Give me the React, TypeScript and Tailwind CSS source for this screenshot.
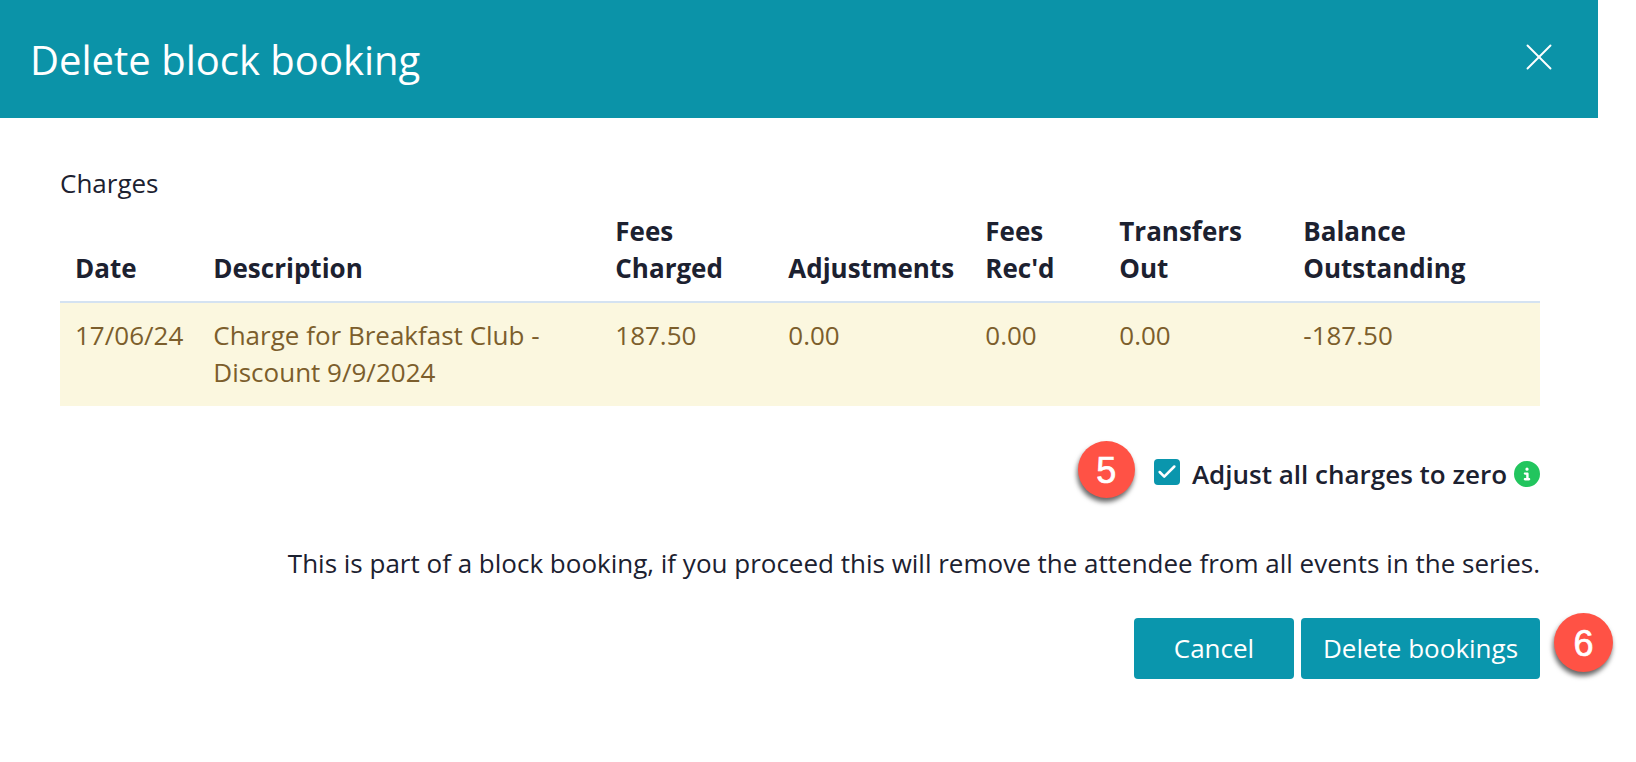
import { X, Check } from "lucide-react";
import { FaCircleInfo } from "react-icons/fa6";

const teal = "bg-[#0a96ad]";

function Th({ children, className = "" }: { children: React.ReactNode; className?: string }) {
  return <th className={`px-[15px] pb-[14px] pt-0 text-left align-bottom font-bold text-[#1c2130] leading-[37px] ${className}`}>{children}</th>;
}
function Td({ children }: { children: React.ReactNode }) {
  return <td className="px-[15px] pt-[14px] pb-[15px] align-top leading-[37px] text-[#7c5e2c]">{children}</td>;
}
function Badge({ n, className }: { n: string; className: string }) {
  return (
    <div className={`flex shrink-0 items-center justify-center rounded-full bg-[#ff5245] pt-[3px] text-[36px] text-white shadow-[-1px_4px_5px_rgba(0,0,0,0.6)] [-webkit-text-stroke:0.7px_white] font-['Liberation_Sans',sans-serif] ${className}`}>
      {n}
    </div>
  );
}

export default function App() {
  return (
    <div className="h-[762px] w-[1636px] overflow-hidden bg-white font-['Open_Sans',sans-serif] text-[26px] text-[#1c2130]">
      <div className="w-[1598px]">
        <header className="flex h-[118px] items-center justify-between bg-[#0b93a8] pl-[30px] pr-[36px]">
          <h1 className="mt-[2px] text-[40px] font-normal text-white">Delete block booking</h1>
          <X className="-mt-[5px] h-[46px] w-[46px] text-white" strokeWidth={1} />
        </header>
        <main className="pl-[60px] pr-[58px] pt-[47px]">
          <p className="mb-[11px] leading-[37px]">Charges</p>
          <table className="w-full border-collapse">
            <thead>
              <tr className="border-b-2 border-[#d4e2f1]">
                <Th className="w-[138px]">Date</Th>
                <Th className="w-[402px]">Description</Th>
                <Th className="w-[173px]">Fees<br />Charged</Th>
                <Th className="w-[197px]">Adjustments</Th>
                <Th className="w-[134px]">Fees<br />Rec'd</Th>
                <Th className="w-[184px]">Transfers<br />Out</Th>
                <Th>Balance<br />Outstanding</Th>
              </tr>
            </thead>
            <tbody>
              <tr className="bg-[#fbf7df]">
                <Td>17/06/24</Td>
                <Td>Charge for Breakfast Club -<br />Discount 9/9/2024</Td>
                <Td>187.50</Td>
                <Td>0.00</Td>
                <Td>0.00</Td>
                <Td>0.00</Td>
                <Td>-187.50</Td>
              </tr>
            </tbody>
          </table>
          <div className="mt-[35px] flex items-start justify-end">
            <Badge n="5" className="h-[57px] w-[57px]" />
            <span className={`ml-[19px] mt-[18px] flex h-[26px] w-[26px] items-center justify-center rounded-[4px] ${teal}`}>
              <Check className="h-[22px] w-[22px] text-white" strokeWidth={2.8} />
            </span>
            <span className="ml-[12px] mt-[15px] font-semibold leading-[37px]">Adjust all charges to zero</span>
            <FaCircleInfo className="ml-[7px] mt-[20px] h-[26px] w-[26px] text-[#22c55e]" />
          </div>
          <p className="mt-[47px] text-right leading-[37px]">This is part of a block booking, if you proceed this will remove the attendee from all events in the series.</p>
          <div className="relative mt-[36px] flex justify-end gap-[7px]">
            <button className={`h-[61px] w-[160px] rounded-[4px] ${teal} text-white`}>Cancel</button>
            <button className={`h-[61px] w-[239px] rounded-[4px] ${teal} text-white`}>Delete bookings</button>
            <div className="absolute right-[-73px] top-[-5px]"><Badge n="6" className="h-[59px] w-[59px]" /></div>
          </div>
        </main>
      </div>
    </div>
  );
}
